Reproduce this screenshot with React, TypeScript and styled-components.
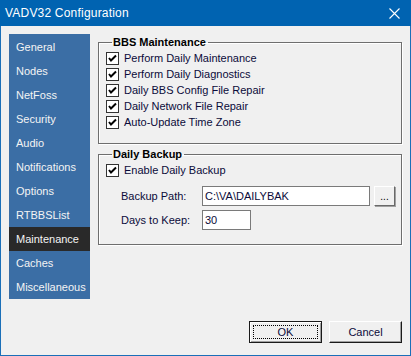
import React from 'react';
import styled, { createGlobalStyle } from 'styled-components';

const GlobalStyle = createGlobalStyle`
	html, body {
		margin: 0;
		padding: 0;
		background: #f0f0f0;
	}
	* {
		box-sizing: border-box;
	}
`;

const sections = [
	'General',
	'Nodes',
	'NetFoss',
	'Security',
	'Audio',
	'Notifications',
	'Options',
	'RTBBSList',
	'Maintenance',
	'Caches',
	'Miscellaneous',
];

const maintenanceOptions = [
	'Perform Daily Maintenance',
	'Perform Daily Diagnostics',
	'Daily BBS Config File Repair',
	'Daily Network File Repair',
	'Auto-Update Time Zone',
];

const Window = styled.div`
	width: 411px;
	height: 356px;
	border: 1px solid #1a6fb8;
	border-top: none;
	background: #f0f0f0;
	display: flex;
	flex-direction: column;
	font-family: 'Liberation Sans', Arial, sans-serif;
	font-size: 11px;
	color: #000;
`;

const TitleBar = styled.div`
	height: 26px;
	margin: 0 -1px;
	padding: 0 0 0 5px;
	background: #0063b1;
	color: #fff;
	display: flex;
	align-items: center;
	justify-content: space-between;
	font-family: 'Liberation Sans', Arial, sans-serif;
	font-size: 12px;
	letter-spacing: 0.2px;
`;

const CloseButton = styled.div`
	width: 32px;
	height: 26px;
	margin-right: 1px;
	display: flex;
	align-items: center;
	justify-content: center;
`;

const Body = styled.div`
	flex: 1;
	display: flex;
	flex-direction: column;
	padding: 8px 8px 0 8px;
`;

const Columns = styled.div`
	display: flex;
	gap: 8px;
`;

const Sidebar = styled.div`
	width: 81px;
	height: 265px;
	padding-top: 1px;
	background: #3b6ea5;
	display: flex;
	flex-direction: column;
`;

const NavItem = styled.div<{ $active?: boolean }>`
	height: 24px;
	padding-left: 7px;
	display: flex;
	align-items: center;
	color: #f4f4f4;
	background: ${(p): string => (p.$active ? '#292929' : 'transparent')};
	font-size: 11px;
	white-space: nowrap;
`;

const Main = styled.div`
	flex: 1;
	display: flex;
	flex-direction: column;
	gap: 4px;
	padding-top: 2px;
`;

const Group = styled.fieldset<{ $height: number }>`
	margin: 0;
	min-inline-size: 0;
	height: ${(p): number => p.$height}px;
	padding: 0 0 0 7px;
	border: 1px solid #6e6e6e;
	box-shadow: inset 1px 1px 0 #fff, 1px 1px 0 #fff;
	display: flex;
	flex-direction: column;
`;

const Legend = styled.legend`
	padding: 0 2px 0 1px;
	margin-left: 6px;
	font-weight: bold;
	font-size: 11px;
	line-height: 13px;
`;

const CheckRow = styled.label`
	height: 16px;
	display: flex;
	align-items: center;
	gap: 5px;
	color: #0b0b3a;
	white-space: nowrap;
`;

const Box = styled.span`
	width: 13px;
	height: 13px;
	border: 1px solid #333;
	background: #fff;
	display: flex;
	align-items: center;
	justify-content: center;
	flex-shrink: 0;
`;

const FieldRow = styled.div`
	display: flex;
	align-items: center;
	padding-left: 15px;
	height: 20px;
`;

const FieldLabel = styled.span`
	width: 81px;
	color: #0b0b3a;
`;

const TextBox = styled.div<{ $width: number }>`
	width: ${(p): number => p.$width}px;
	height: 20px;
	background: #fff;
	border: 1px solid #7a7a7a;
	padding: 0 2px;
	display: flex;
	align-items: center;
	color: #0b0b3a;
`;

const BrowseButton = styled.div`
	width: 21px;
	height: 20px;
	margin-left: 4px;
	border: 1px solid #fff;
	border-right-color: #696969;
	border-bottom-color: #696969;
	box-shadow: 1px 1px 0 #a0a0a0;
	display: flex;
	align-items: flex-end;
	justify-content: center;
	padding-bottom: 4px;
	font-size: 10px;
	line-height: 8px;
`;

const Footer = styled.div`
	margin-top: auto;
	padding-bottom: 12px;
	display: flex;
	justify-content: flex-end;
	gap: 7px;
`;

const DialogButton = styled.div<{ $default?: boolean }>`
	width: 73px;
	height: 22px;
	display: flex;
	align-items: center;
	justify-content: center;
	border: 1px solid ${(p): string => (p.$default ? '#1a1a1a' : '#fff')};
	border-right-color: #1a1a1a;
	border-bottom-color: #1a1a1a;
	box-shadow: ${(p): string =>
		p.$default ? 'inset 1px 1px 0 #fff, inset -1px -1px 0 #a0a0a0' : 'inset -1px -1px 0 #a0a0a0'};
	background: #f0f0f0;
	color: #0b0b3a;
	font-size: 11px;
	position: relative;
`;

const FocusRect = styled.span`
	position: absolute;
	inset: 3px;
	border: 1px dotted #000;
`;

const Spacer = styled.div<{ $h: number }>`
	height: ${(p): number => p.$h}px;
	flex-shrink: 0;
`;

const CheckMark = (): JSX.Element => (
	<svg width="9" height="9" viewBox="0 0 9 9">
		<polyline points="1,4 3,6.5 8,1.5" fill="none" stroke="#000" strokeWidth="2" />
	</svg>
);

const Check = ({ label }: { label: string }): JSX.Element => (
	<CheckRow>
		<Box>
			<CheckMark />
		</Box>
		{label}
	</CheckRow>
);

const App = (): JSX.Element => {
	return (
		<>
			<GlobalStyle />
			<Window>
				<TitleBar>
					<span>VADV32 Configuration</span>
					<CloseButton>
						<svg width="11" height="11" viewBox="0 0 11 11">
							<path d="M0.5 0.5 L10.5 10.5 M10.5 0.5 L0.5 10.5" stroke="#fff" strokeWidth="1.1" />
						</svg>
					</CloseButton>
				</TitleBar>
				<Body>
					<Columns>
						<Sidebar>
							{sections.map((s) => (
								<NavItem key={s} $active={s === 'Maintenance'}>
									{s}
								</NavItem>
							))}
						</Sidebar>
						<Main>
							<Group $height={108}>
								<Legend>BBS Maintenance</Legend>
								<Spacer $h={1} />
								{maintenanceOptions.map((o) => (
									<Check key={o} label={o} />
								))}
							</Group>
							<Group $height={97}>
								<Legend>Daily Backup</Legend>
								<Spacer $h={1} />
								<Check label="Enable Daily Backup" />
								<Spacer $h={8} />
								<FieldRow>
									<FieldLabel>Backup Path:</FieldLabel>
									<TextBox $width={168}>C:\VA\DAILYBAK</TextBox>
									<BrowseButton>...</BrowseButton>
								</FieldRow>
								<Spacer $h={4} />
								<FieldRow>
									<FieldLabel>Days to Keep:</FieldLabel>
									<TextBox $width={49}>30</TextBox>
								</FieldRow>
							</Group>
						</Main>
					</Columns>
					<Footer>
						<DialogButton $default>
							<FocusRect />
							OK
						</DialogButton>
						<DialogButton>Cancel</DialogButton>
					</Footer>
				</Body>
			</Window>
		</>
	);
};

export default App;
